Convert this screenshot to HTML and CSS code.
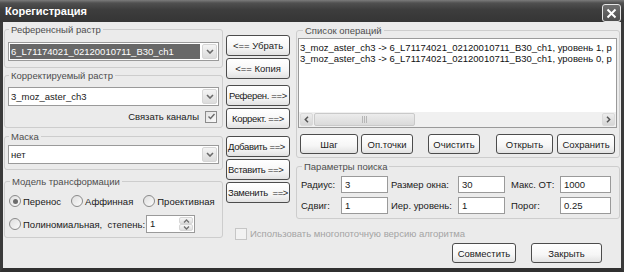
FILE: index.html
```html
<!DOCTYPE html>
<html lang="ru">
<head>
<meta charset="utf-8">
<title>Корегистрация</title>
<link rel="stylesheet" href="styles.css">
</head>
<body>
<div class="window">
  <div class="titlebar">
    <span class="title">Корегистрация</span>
    <span class="close"><svg width="11" height="11" viewBox="0 0 11 11"><path d="M1.5 1.5 L9.5 9.5 M9.5 1.5 L1.5 9.5" stroke="#fff" stroke-width="2"/></svg></span>
  </div>
  <div class="frame">
    <div class="client">
      <div class="col-left">
        <fieldset class="group g-ref">
          <legend>Референсный растр</legend>
          <div class="combo selected">
            <span class="combo-text">6_L71174021_02120010711_B30_ch1</span>
            <span class="combo-btn"><svg width="8" height="5" viewBox="0 0 8 5"><path d="M1 1 L4 4 L7 1" fill="none" stroke="#6a6a6a" stroke-width="1.6"/></svg></span>
          </div>
        </fieldset>
        <fieldset class="group g-cor">
          <legend>Корректируемый растр</legend>
          <div class="combo">
            <span class="combo-text">3_moz_aster_ch3</span>
            <span class="combo-btn"><svg width="8" height="5" viewBox="0 0 8 5"><path d="M1 1 L4 4 L7 1" fill="none" stroke="#6a6a6a" stroke-width="1.6"/></svg></span>
          </div>
          <div class="check-row">
            <span>Связать каналы</span>
            <span class="checkbox"><svg width="9" height="9" viewBox="0 0 9 9"><path d="M1.5 4.5 L3.5 6.5 L7.5 2" fill="none" stroke="#6a6a6a" stroke-width="1.4"/></svg></span>
          </div>
        </fieldset>
        <fieldset class="group g-mask">
          <legend>Маска</legend>
          <div class="combo">
            <span class="combo-text">нет</span>
            <span class="combo-btn"><svg width="8" height="5" viewBox="0 0 8 5"><path d="M1 1 L4 4 L7 1" fill="none" stroke="#6a6a6a" stroke-width="1.6"/></svg></span>
          </div>
        </fieldset>
        <fieldset class="group g-model">
          <legend>Модель трансформации</legend>
          <div class="radio-row r1">
            <span class="radio-item"><span class="radio checked"></span>Перенос</span>
            <span class="radio-item"><span class="radio"></span>Аффинная</span>
            <span class="radio-item"><span class="radio"></span>Проективная</span>
          </div>
          <div class="radio-row r2">
            <span class="radio-item"><span class="radio"></span>Полиномиальная,&nbsp; степень:</span>
            <span class="spin">
              <span class="spin-text">1</span>
              <span class="spin-btns">
                <span class="spin-btn"><svg width="7" height="4" viewBox="0 0 7 4"><path d="M1 3.5 L3.5 1 L6 3.5" fill="none" stroke="#707070" stroke-width="1.3"/></svg></span>
                <span class="spin-btn"><svg width="7" height="4" viewBox="0 0 7 4"><path d="M1 0.5 L3.5 3 L6 0.5" fill="none" stroke="#707070" stroke-width="1.3"/></svg></span>
              </span>
            </span>
          </div>
        </fieldset>
      </div>

      <div class="col-rest">
        <div class="top">
          <div class="col-mid">
            <div class="btn">&lt;== Убрать</div>
            <div class="btn">&lt;== Копия</div>
            <div class="btn tight gap-s">Референ. ==&gt;</div>
            <div class="btn tight">Коррект. ==&gt;</div>
            <div class="btn tight left gap-l">Добавить ==&gt;</div>
            <div class="btn tight left">Вставить ==&gt;</div>
            <div class="btn tight left">Заменить &nbsp;==&gt;</div>
          </div>
          <div class="col-right">
            <fieldset class="group g-list">
              <legend>Список операций</legend>
              <div class="listbox">
                <div class="list-items">
                  <div class="item">3_moz_aster_ch3 -&gt; 6_L71174021_02120010711_B30_ch1, уровень 1, р</div>
                  <div class="item">3_moz_aster_ch3 -&gt; 6_L71174021_02120010711_B30_ch1, уровень 0, р</div>
                </div>
                <div class="hscroll">
                  <span class="sb-arrow"><svg width="5" height="7" viewBox="0 0 5 7"><path d="M4 0.8 L1.3 3.5 L4 6.2" fill="none" stroke="#555" stroke-width="1.5"/></svg></span>
                  <span class="sb-thumb"><span class="grip"></span></span>
                  <span class="sb-track"></span>
                  <span class="sb-arrow"><svg width="5" height="7" viewBox="0 0 5 7"><path d="M1 0.8 L3.7 3.5 L1 6.2" fill="none" stroke="#555" stroke-width="1.5"/></svg></span>
                </div>
              </div>
              <div class="btn-row">
                <div class="btn b-step">Шаг</div>
                <div class="btn b-pts">Оп.точки</div>
                <div class="btn b-clear">Очистить</div>
                <div class="btn b-open">Открыть</div>
                <div class="btn b-save">Сохранить</div>
              </div>
            </fieldset>
            <fieldset class="group g-params">
              <legend>Параметры поиска</legend>
              <div class="params">
                <span class="plabel">Радиус:</span><span class="input">3</span>
                <span class="plabel l2">Размер окна:</span><span class="input">30</span>
                <span class="plabel l3">Макс. ОТ:</span><span class="input wide">1000</span>
                <span class="plabel">Сдвиг:</span><span class="input">1</span>
                <span class="plabel l2">Иер. уровень:</span><span class="input">1</span>
                <span class="plabel l3">Порог:</span><span class="input wide">0.25</span>
              </div>
            </fieldset>
          </div>
        </div>
        <div class="multi">
          <span class="checkbox disabled"></span>
          <span>Использовать многопоточную версию алгоритма</span>
        </div>
        <div class="actions">
          <div class="btn b-apply">Совместить</div>
          <div class="btn b-close">Закрыть</div>
        </div>
      </div>
    </div>
  </div>
</div>
</body>
</html>
```

FILE: styles.css
```css
* { box-sizing: border-box; }
html, body { margin: 0; padding: 0; }
body {
  font-family: "Liberation Sans", Arial, sans-serif;
  font-size: 9.5px;
  color: #1a1a1a;
  background: #ffffff;
}
.window {
  width: 624px;
  height: 272px;
  display: flex;
  flex-direction: column;
  background: #3a3a3a;
}
.titlebar {
  height: 22px;
  flex: none;
  display: flex;
  align-items: center;
  justify-content: space-between;
  padding: 0 3px 0 5px;
  background: linear-gradient(#7c7c7c 0, #505050 3px, #3d3d3d 45%, #353535 100%);
}
.title {
  color: #ffffff;
  font-weight: bold;
  font-size: 11px;
}
.close {
  width: 19px;
  height: 18px;
  margin-top: 4px;
  border: 1px solid #e6e6e6;
  border-radius: 3px;
  background: linear-gradient(#707070, #4e4e4e);
  display: flex;
  align-items: center;
  justify-content: center;
}
.frame {
  flex: 1;
  display: flex;
  min-height: 0;
  border-left: 3px solid #3a3a3a;
  border-right: 3px solid #3a3a3a;
  border-bottom: 4px solid #303030;
}
.client {
  flex: 1;
  min-width: 0;
  display: flex;
  background: #ebebeb;
  padding: 1px 1px 0 1px;
}

/* groups */
.group {
  margin: 0;
  border: 1px solid #cdcdcd;
  border-radius: 3px;
  padding: 6px 3px 6px 3px;
  min-width: 0;
}
.group legend {
  padding: 1px 2px 0;
  margin-left: 1px;
  line-height: 12px;
  color: #4e4e4e;
}

.col-left {
  width: 219px;
  flex: none;
  display: flex;
  flex-direction: column;
}
.g-cor { margin-top: 1px; padding: 5px 3px 4px 3px; }
.g-mask { margin-top: 2px; padding: 2px 3px 5px 3px; }
.g-model { margin-top: 5px; padding: 3px 3px 4px 4px; }

/* combo */
.combo {
  height: 19px;
  border: 1px solid #9a9a9a;
  background: #ffffff;
  display: flex;
}
.combo-text {
  flex: 1;
  padding-left: 2px;
  line-height: 17px;
  white-space: nowrap;
  overflow: hidden;
}
.combo.selected .combo-text {
  margin: 1px;
  line-height: 15px;
  padding-left: 1px;
  background: #686868;
  color: #ffffff;
}
.combo-btn {
  width: 15px;
  margin: 1px;
  border: 1px solid #d6d6d6;
  border-radius: 2px;
  background: linear-gradient(#f4f4f4, #dcdcdc);
  display: flex;
  align-items: center;
  justify-content: center;
}

.check-row {
  margin-top: 4px;
  height: 13px;
  display: flex;
  align-items: center;
  justify-content: flex-end;
  padding-right: 2px;
}
.checkbox {
  width: 12px;
  height: 12px;
  border: 1px solid #8c8c8c;
  background: linear-gradient(135deg, #e2e2e2, #fafafa);
  margin-left: 6px;
  display: flex;
  align-items: center;
  justify-content: center;
}
.checkbox.disabled {
  border-color: #c6c6c6;
  background: #f2f2f2;
  margin-left: 0;
  margin-right: 3px;
}

/* radios */
.radio-row {
  display: flex;
  align-items: center;
}
.r1 { margin-top: 3px; height: 14px; gap: 10px; }
.r2 { margin-top: 7px; height: 18px; }
.radio-item {
  display: inline-flex;
  align-items: center;
  white-space: nowrap;
}
.radio {
  width: 12px;
  height: 12px;
  border-radius: 50%;
  border: 1px solid #8a8a8a;
  background: linear-gradient(135deg, #dedede, #fbfbfb);
  margin-right: 2px;
  display: inline-flex;
  align-items: center;
  justify-content: center;
}
.radio.checked::after {
  content: "";
  width: 5px;
  height: 5px;
  border-radius: 50%;
  background: #6c6c6c;
}
.spin {
  width: 49px;
  height: 18px;
  margin-left: 1px;
  border: 1px solid #9a9a9a;
  background: #ffffff;
  display: flex;
}
.spin-text {
  flex: 1;
  padding-left: 3px;
  line-height: 16px;
}
.spin-btns {
  width: 14px;
  margin: 1px;
  display: flex;
  flex-direction: column;
}
.spin-btn {
  flex: 1;
  border: 1px solid #d6d6d6;
  border-radius: 2px;
  background: linear-gradient(#f6f6f6, #dedede);
  display: flex;
  align-items: center;
  justify-content: center;
}

/* right part */
.col-rest {
  flex: 1;
  min-width: 0;
  margin-left: 3px;
  display: flex;
  flex-direction: column;
}
.top { display: flex; min-width: 0; }
.col-mid {
  width: 64px;
  flex: none;
  padding-top: 12px;
  display: flex;
  flex-direction: column;
  gap: 2px;
}
.col-mid .gap-s { margin-top: 4px; }
.col-mid .gap-l { margin-top: 5px; }
.btn {
  height: 21px;
  border: 1px solid #4c4c4c;
  border-radius: 3px;
  background: linear-gradient(#ffffff 0, #f6f6f6 60%, #e2e2e2 100%);
  display: flex;
  align-items: center;
  justify-content: center;
  white-space: nowrap;
  overflow: hidden;
  color: #1a1a1a;
}
.btn.tight { letter-spacing: -0.35px; padding: 0; }
.btn.left { justify-content: flex-start; padding-left: 1px; }

.col-right {
  flex: 1;
  min-width: 0;
  margin-left: 6px;
  padding-top: 1px;
  display: flex;
  flex-direction: column;
}
.g-list { padding: 1px 2px 3px 1px; }
.g-list legend { margin-left: 5px; }
.listbox {
  height: 90px;
  border: 1px solid #9a9a9a;
  background: #ffffff;
  display: flex;
  flex-direction: column;
  min-width: 0;
}
.list-items {
  flex: 1;
  padding: 3px 0 0 1px;
  line-height: 11px;
  white-space: nowrap;
  overflow: hidden;
  color: #111;
}
.hscroll {
  height: 15px;
  display: flex;
  background: #f0f0f0;
  padding: 0 1px;
}
.sb-arrow {
  width: 13px;
  margin: 1px 0;
  border: 1px solid #dadada;
  border-radius: 2px;
  background: linear-gradient(#ececec, #d6d6d6);
  display: flex;
  align-items: center;
  justify-content: center;
}
.sb-thumb {
  width: 101px;
  margin: 1px 0 1px 1px;
  border: 1px solid #c9c9c9;
  border-radius: 2px;
  background: linear-gradient(#ececec, #dadada);
  display: flex;
  align-items: center;
  justify-content: center;
}
.grip {
  width: 5px;
  height: 7px;
  background: repeating-linear-gradient(90deg, #b6b6b6 0 1px, transparent 1px 2px);
}
.sb-track { flex: 1; }

.btn-row {
  margin-top: 6px;
  display: flex;
}
.btn-row .btn { height: 20px; }
.b-step { width: 58px; margin-left: 2px; }
.b-pts { width: 52px; margin-left: 3px; }
.b-clear { width: 52px; margin-left: 15px; }
.b-open { width: 57px; margin-left: 16px; }
.b-save { width: 58px; margin-left: 4px; }

.g-params { margin-top: 2px; padding: 3px 2px 4px 4px; }
.params {
  display: grid;
  grid-template-columns: 40px 47px 70px 47px 55px 51px;
  grid-auto-rows: 17px;
  row-gap: 4px;
  align-items: center;
}
.plabel { white-space: nowrap; }
.plabel.l2 { padding-left: 3px; }
.plabel.l3 { padding-left: 6px; }
.input {
  height: 17px;
  border: 1px solid #9a9a9a;
  background: #ffffff;
  padding-left: 3px;
  line-height: 15px;
}

.multi {
  margin-top: 8px;
  height: 13px;
  padding-left: 9px;
  display: flex;
  align-items: center;
  color: #a4a4a4;
}
.actions {
  margin-top: 3px;
  display: flex;
  justify-content: flex-end;
  padding-right: 18px;
}
.actions .btn { height: 20px; }
.b-apply { width: 64px; }
.b-close { width: 71px; margin-left: 15px; }
```
